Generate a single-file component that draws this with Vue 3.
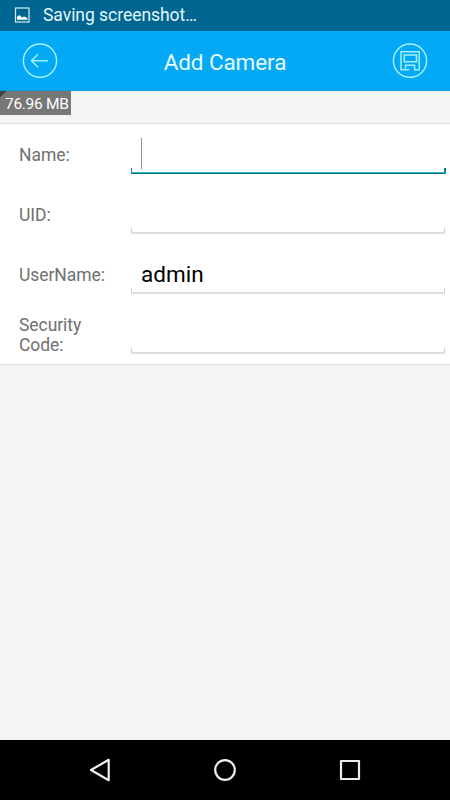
<script setup>
const fields = [
  { label: 'Name:', value: '', focused: true },
  { label: 'UID:', value: '', focused: false },
  { label: 'UserName:', value: 'admin', focused: false },
  { label: 'Security Code:', value: '', focused: false },
]
</script>

<template>
  <div class="screen">
    <div class="status">
      <svg class="picture" width="16" height="16" viewBox="0 0 16 16">
        <rect x="1.5" y="1" width="13.5" height="14" fill="none" stroke="#d4edf5" stroke-width="1.2" />
        <path d="M3 12.8v-3L5.4 8l2.6 2.4 2-1 3.4 1.6v1.8z" fill="#fff" />
      </svg>
      <span class="status-text">Saving screenshot…</span>
    </div>
    <header class="bar">
      <svg width="36" height="36" viewBox="0 0 36 36" class="bar-icon">
        <circle cx="18" cy="17.7" r="16.6" />
        <path d="M26 17.7H9.5M16 11.2L9.5 17.7l6.5 6.5" />
      </svg>
      <h1 class="title">Add Camera</h1>
      <svg width="36" height="36" viewBox="0 0 36 36" class="bar-icon">
        <circle cx="18" cy="17.7" r="16.6" />
        <path d="M17.2 26.8H9V8.8h18.2v18h-4.6v-4.6h-9.1v3.2M12.3 12h12.2v6.8H12.3z" />
      </svg>
    </header>
    <div class="strip">
      <div class="memory">76.96 MB</div>
    </div>
    <main class="form">
      <div v-for="f in fields" :key="f.label" class="row">
        <div class="label">{{ f.label }}</div>
        <div class="field" :class="{ focused: f.focused }">
          <span v-if="f.focused" class="caret"></span>
          <span class="value">{{ f.value }}</span>
        </div>
      </div>
    </main>
    <div class="space"></div>
    <nav class="nav">
      <svg width="24" height="26" viewBox="0 0 24 26"><path d="M20.7 2.8v20.4L3 13z" /></svg>
      <svg width="24" height="26" viewBox="0 0 24 26"><circle cx="12" cy="13" r="9.8" /></svg>
      <svg width="24" height="26" viewBox="0 0 24 26"><rect x="3" y="4" width="18" height="18" /></svg>
    </nav>
  </div>
</template>

<style>
body {
  margin: 0;
}
</style>

<style scoped>
.screen {
  width: 450px;
  height: 800px;
  display: flex;
  flex-direction: column;
  background: #f4f4f4;
  font-family: Roboto, sans-serif;
  overflow: hidden;
}
.status {
  height: 31px;
  flex: none;
  box-sizing: border-box;
  padding: 0 0 1px 14px;
  display: flex;
  align-items: center;
  gap: 13px;
  background: #006691;
  color: #e4f5fa;
}
.status-text {
  font-size: 17.5px;
  letter-spacing: -0.04px;
  line-height: 20px;
}
.bar {
  height: 60px;
  flex: none;
  box-sizing: border-box;
  padding: 0 22px;
  display: flex;
  align-items: center;
  justify-content: space-between;
  background: #03a9f4;
  border-bottom: 1px solid #0799d8;
}
.bar-icon {
  fill: none;
  stroke: #a5f0ff;
  stroke-width: 1.5;
}
.title {
  margin: 3px 0 0;
  font-size: 22.5px;
  letter-spacing: -0.1px;
  font-weight: 400;
  line-height: 28px;
  color: #e6faff;
}
.strip {
  height: 32px;
  flex: none;
  border-bottom: 1px solid #e0e0e0;
}
.memory {
  box-sizing: border-box;
  width: 71px;
  height: 24px;
  padding: 1px 0 0 5px;
  font-size: 15.5px;
  letter-spacing: -0.3px;
  line-height: 24px;
  white-space: nowrap;
  color: #fff;
  background: linear-gradient(135deg, #3e4548 0 4.5px, #777 5px);
}
.form {
  flex: none;
  background: #fff;
  border-bottom: 1px solid #dedede;
}
.row {
  height: 60px;
  box-sizing: border-box;
  padding: 0 4px 0 19px;
  display: flex;
  align-items: center;
}
.label {
  width: 112px;
  box-sizing: border-box;
  padding: 2px 24px 0 0;
  font-size: 17.5px;
  letter-spacing: -0.06px;
  line-height: 20px;
  color: #707070;
}
.field {
  flex: 1;
  height: 40px;
  display: flex;
  align-items: center;
  padding: 0 10px;
  background:
    linear-gradient(#dedede, #dedede) 0 100% / calc(100% - 1px) 2px no-repeat,
    linear-gradient(#d0d0d0, #d0d0d0) 0 100% / 1px 6px no-repeat,
    linear-gradient(#d0d0d0, #d0d0d0) calc(100% - 1px) 100% / 1px 6px no-repeat;
}
.field.focused {
  background:
    linear-gradient(#30b4b8 50%, #007484 50%) 0 100% / 100% 2px no-repeat,
    linear-gradient(#008090, #008090) 0 100% / 1px 6px no-repeat,
    linear-gradient(#008090, #008090) 100% 100% / 2px 6px no-repeat;
}
.caret {
  width: 1px;
  height: 31px;
  margin-bottom: 2px;
  background: #929292;
}
.value {
  font-size: 22.5px;
  line-height: 28px;
  color: #000;
}
.space {
  flex: 1;
}
.nav {
  height: 60px;
  flex: none;
  box-sizing: border-box;
  padding: 0 88px;
  display: flex;
  align-items: center;
  justify-content: space-between;
  background: #000;
}
.nav svg {
  fill: none;
  stroke: #eee;
  stroke-width: 2.2;
  stroke-linejoin: round;
}
</style>
